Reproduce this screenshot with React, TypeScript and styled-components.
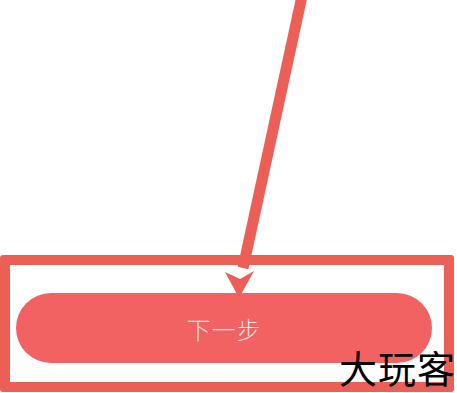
import React from "react";
import styled, { createGlobalStyle } from "styled-components";

const GlobalStyle = createGlobalStyle`
    html, body {
        margin: 0;
        padding: 0;
        background: #ffffff;
    }
    body {
        font-family: "Noto Sans CJK SC", "Noto Sans", sans-serif;
    }
`;

const Page = styled.div`
    position: relative;
    width: 457px;
    height: 393px;
    overflow: hidden;
    background: #ffffff;
    display: flex;
    flex-direction: column;
`;

const Spacer = styled.div`
    height: 255px;
    flex-shrink: 0;
`;

const Frame = styled.div`
    box-sizing: border-box;
    width: 454px;
    height: 137px;
    border: 10px solid #ec5f57;
    border-radius: 3px;
    padding: 28px 11px 0 6px;
`;

const NextButton = styled.button`
    display: flex;
    align-items: center;
    justify-content: center;
    width: 416px;
    height: 70px;
    border: none;
    border-radius: 35px;
    background: #f26262;
    color: #fbe3e1;
    font-family: "Noto Sans CJK SC", "Noto Sans", sans-serif;
    font-size: 24px;
    font-weight: 300;
    letter-spacing: 1px;
    padding: 0;
    cursor: pointer;
`;

const Arrow = styled.svg`
    position: absolute;
    left: 0;
    top: 0;
    pointer-events: none;
`;

const Watermark = styled.div`
    position: absolute;
    right: 1px;
    bottom: 7px;
    font-family: "Noto Sans CJK SC", sans-serif;
    font-size: 38px;
    font-weight: 400;
    line-height: 1;
    color: #000000;
    letter-spacing: 1px;
`;

const App: React.FC = () => {
    return (
        <Page>
            <GlobalStyle />
            <Spacer />
            <Frame>
                <NextButton>下一步</NextButton>
            </Frame>
            <Arrow width="457" height="393" viewBox="0 0 457 393">
                <line x1="302" y1="-4" x2="243" y2="268" stroke="#ec5f57" strokeWidth="11" />
                <polygon points="225,272 240,279 254,271 239,298" fill="#ec5f57" />
            </Arrow>
            <Watermark>大玩客</Watermark>
        </Page>
    );
};

export default App;
